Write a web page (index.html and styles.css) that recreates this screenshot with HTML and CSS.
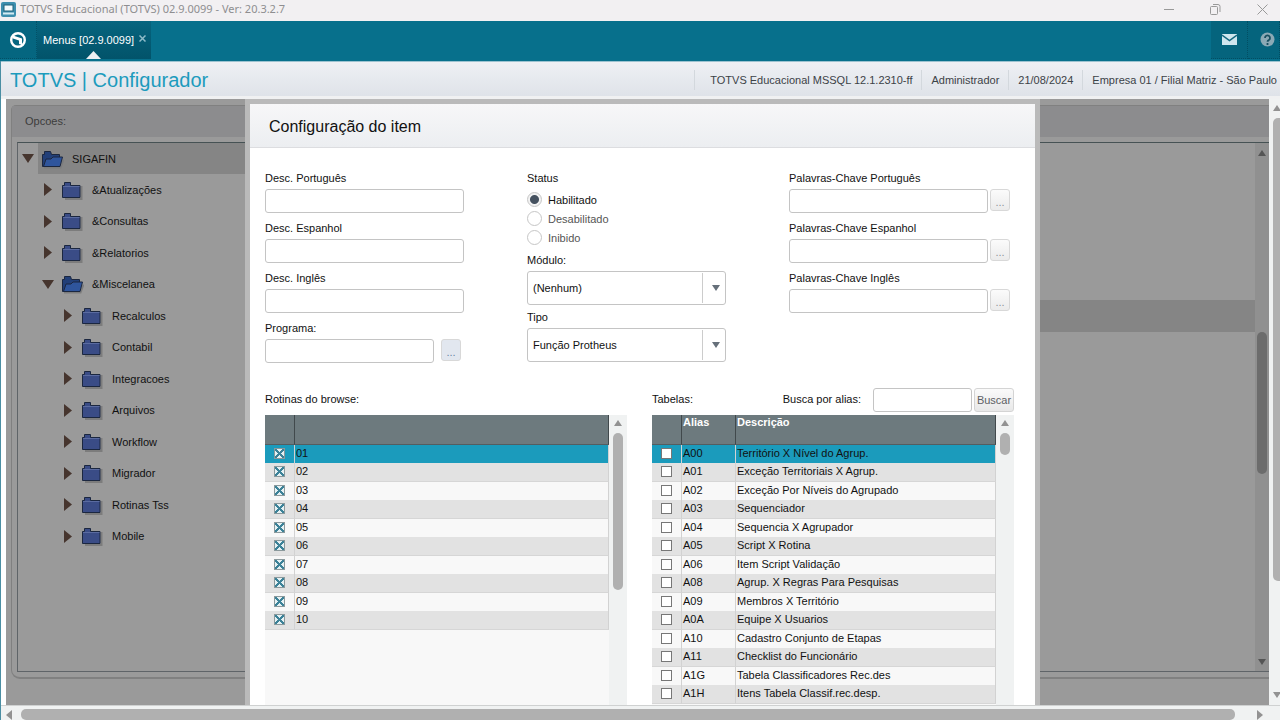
FILE: index.html
```
<!DOCTYPE html>
<html lang="pt-BR">
<head>
  <meta charset="utf-8">
  <title>TOTVS Educacional - Configurador</title>
  <link rel="stylesheet" href="styles.css">
</head>
<body>

  <!-- simbolos usados na pagina -->
  <svg class="defs" width="0" height="0">
    <symbol id="folder" viewBox="0 0 22 20">
      <path d="M3 19h16.500V6" fill="none" stroke="#7c7c7c" stroke-width="2"/>
      <path d="M.5 5.500h2V2.500h6v3h9.500v12H.5z" fill="#3a4c86" stroke="#1b2740"/>
      <path d="M1 6.500h16.500" stroke="#5a6ba0"/>
    </symbol>
    <symbol id="folder-open" viewBox="0 0 22 20">
      <path d="M2 18.500h16.500l3-8" fill="none" stroke="#7c7c7c" stroke-width="2"/>
      <path d="M.5 5.500h2v-3h6l1 3h8v12H.5z" fill="#223f78" stroke="#1b2740"/>
      <path d="M1.500 17.500L4 10h5l2-2h9.500L18 17.500z" fill="#2f559c" stroke="#1b2740"/>
    </symbol>
    <symbol id="up" viewBox="0 0 8 6"><path d="M4 0l4 6H0z" fill="currentColor"/></symbol>
    <symbol id="down" viewBox="0 0 8 6"><path d="M0 0h8L4 6z" fill="currentColor"/></symbol>
    <symbol id="left" viewBox="0 0 6 10"><path d="M6 0v10L0 5z" fill="currentColor"/></symbol>
    <symbol id="right" viewBox="0 0 6 10"><path d="M0 0l6 5-6 5z" fill="currentColor"/></symbol>
  </svg>

  <div class="titlebar">
    <svg width="15" height="15" viewBox="0 0 15 15">
      <rect width="15" height="15" rx="2" fill="#3e8fae"/>
      <rect x="3" y="3" width="9" height="6" fill="#f4fafc" stroke="#1f6079"/>
      <path d="M2 11.500h11" stroke="#d5ebf2" stroke-width="2"/>
    </svg>
    <span class="titlebar-text">TOTVS Educacional (TOTVS) 02.9.0099 - Ver: 20.3.2.7</span>
    <div class="window-buttons">
      <button aria-label="Minimizar"><svg width="10" height="10"><path d="M0 5.500h10" stroke="#999"/></svg></button>
      <button aria-label="Restaurar"><svg width="11" height="11" fill="none" stroke="#999"><rect x="0.500" y="2.500" width="7" height="8" rx="1"/><path d="M3 .5h5a2 2 0 0 1 2 2V8"/></svg></button>
      <button aria-label="Fechar"><svg width="11" height="11" stroke="#999"><path d="M.5.5l10 10M10.500.5l-10 10"/></svg></button>
    </div>
  </div>

  <div class="topbar">
    <a class="logo" href="#" aria-label="Inicio">
      <svg width="18" height="18" viewBox="0 0 18 18">
        <circle cx="9" cy="9" r="6.800" fill="none" stroke="#fff" stroke-width="2.400"/>
        <path d="M4 4.500l9 3v6.500L10 13V9.500L4 7.500z" fill="#fff"/>
      </svg>
    </a>
    <div class="tab">
      <span>Menus [02.9.0099]</span>
      <button class="tab-close" aria-label="Fechar aba"><svg width="7" height="7" stroke="#8fbcc9" stroke-width="1.500"><path d="M.5.5l6 6M6.500.5l-6 6"/></svg></button>
      <svg class="tab-mark" width="15" height="8"><path d="M7.500 0L15 8H0z" fill="#eef0f3"/></svg>
    </div>
    <div class="topbar-icons">
      <button aria-label="Mensagens">
        <svg width="15" height="11" viewBox="0 0 15 11"><rect width="15" height="11" fill="#cfe6ee"/><path d="M0 1l7.500 5.500L15 1" fill="none" stroke="#15687f" stroke-width="1.500"/></svg>
      </button>
      <button class="help" aria-label="Ajuda">
        <svg width="15" height="15" viewBox="0 0 15 15"><circle cx="7.500" cy="7.500" r="7" fill="#8aa9b5"/><path d="M5 6a2.500 2.500 0 1 1 3.800 2.100Q7.500 8.800 7.500 9.800M7.500 11v2" fill="none" stroke="#174f60" stroke-width="1.800"/></svg>
      </button>
    </div>
  </div>

  <div class="app">
    <header class="header">
      <h1>TOTVS | Configurador</h1>
      <ul class="info">
        <li>TOTVS Educacional MSSQL 12.1.2310-ff</li>
        <li>Administrador</li>
        <li>21/08/2024</li>
        <li>Empresa 01 / Filial Matriz - São Paulo</li>
      </ul>
    </header>

    <div class="main">
      <div class="content">
        <div class="panel">
          <div class="panel-title">Opcoes:</div>
          <div class="panel-body">
            <ul class="tree" id="tree"></ul>
            <div class="detail"><div class="detail-row"></div></div>
            <div class="scroll scroll-dark">
              <svg width="8" height="6"><use href="#up"/></svg>
              <div class="thumb"></div>
              <svg width="8" height="6"><use href="#down"/></svg>
            </div>
          </div>
        </div>

        <div class="overlay">
          <div class="modal" role="dialog" aria-labelledby="modalTitle">
            <h2 id="modalTitle">Configuração do item</h2>

            <form class="form" onsubmit="return false;">
              <div class="col">
                <div class="field"><label for="descPt">Desc. Português</label><input type="text" id="descPt"></div>
                <div class="field"><label for="descEs">Desc. Espanhol</label><input type="text" id="descEs"></div>
                <div class="field"><label for="descEn">Desc. Inglês</label><input type="text" id="descEn"></div>
                <div class="field">
                  <label for="programa">Programa:</label>
                  <div class="with-button programa"><input type="text" id="programa"><button class="more more-blue">...</button></div>
                </div>
              </div>

              <div class="col col-status">
                <fieldset>
                  <legend>Status</legend>
                  <label><input type="radio" name="status" checked>Habilitado</label>
                  <label><input type="radio" name="status">Desabilitado</label>
                  <label><input type="radio" name="status">Inibido</label>
                </fieldset>
                <div class="field">
                  <label for="modulo">Módulo:</label>
                  <div class="select"><select id="modulo"><option>(Nenhum)</option></select><span class="select-arrow"><svg width="8" height="6"><use href="#down"/></svg></span></div>
                </div>
                <div class="field">
                  <label for="tipo">Tipo</label>
                  <div class="select"><select id="tipo"><option>Função Protheus</option></select><span class="select-arrow"><svg width="8" height="6"><use href="#down"/></svg></span></div>
                </div>
              </div>

              <div class="col">
                <div class="field"><label for="chavePt">Palavras-Chave Português</label><div class="with-button"><input type="text" id="chavePt"><button class="more">...</button></div></div>
                <div class="field"><label for="chaveEs">Palavras-Chave Espanhol</label><div class="with-button"><input type="text" id="chaveEs"><button class="more">...</button></div></div>
                <div class="field"><label for="chaveEn">Palavras-Chave Inglês</label><div class="with-button"><input type="text" id="chaveEn"><button class="more">...</button></div></div>
              </div>
            </form>

            <div class="grids">
              <div class="grid">
                <div class="grid-title">Rotinas do browse:</div>
                <div class="grid-box">
                  <div class="grid-rows">
                    <table>
                      <thead><tr><th class="check-col"></th><th></th></tr></thead>
                      <tbody id="rotinas"></tbody>
                    </table>
                  </div>
                  <div class="scroll scroll-rotinas">
                    <svg width="8" height="6"><use href="#up"/></svg>
                    <div class="thumb"></div>
                  </div>
                </div>
              </div>

              <div class="grid">
                <div class="grid-title">
                  <span>Tabelas:</span>
                  <label class="busca-label" for="busca">Busca por alias:</label>
                  <input type="text" id="busca">
                  <button class="buscar">Buscar</button>
                </div>
                <div class="grid-box">
                  <div class="grid-rows">
                    <table>
                      <thead><tr><th class="check-col"></th><th class="alias-col">Alias</th><th>Descrição</th></tr></thead>
                      <tbody id="tabelas"></tbody>
                    </table>
                  </div>
                  <div class="scroll scroll-tabelas">
                    <svg width="8" height="6"><use href="#up"/></svg>
                    <div class="thumb"></div>
                  </div>
                </div>
              </div>
            </div>
          </div>
        </div>
      </div>

      <div class="scroll scroll-page">
        <svg width="8" height="6"><use href="#up"/></svg>
        <div class="thumb"></div>
        <svg width="8" height="6"><use href="#down"/></svg>
      </div>
    </div>

    <div class="scroll-h">
      <svg width="6" height="10"><use href="#left"/></svg>
      <div class="thumb"></div>
      <svg width="6" height="10"><use href="#right"/></svg>
    </div>
  </div>

  <script>
    const menu = {
      nome: "SIGAFIN", aberto: true, ativo: true, itens: [
        { nome: "&Atualizações" },
        { nome: "&Consultas" },
        { nome: "&Relatorios" },
        { nome: "&Miscelanea", aberto: true, itens: [
          { nome: "Recalculos" },
          { nome: "Contabil" },
          { nome: "Integracoes" },
          { nome: "Arquivos" },
          { nome: "Workflow" },
          { nome: "Migrador" },
          { nome: "Rotinas Tss" },
          { nome: "Mobile" }
        ] }
      ]
    };

    const tabelas = [
      ["A00", "Território X Nível do Agrup."],
      ["A01", "Exceção Territoriais X Agrup."],
      ["A02", "Exceção Por Níveis do Agrupado"],
      ["A03", "Sequenciador"],
      ["A04", "Sequencia X Agrupador"],
      ["A05", "Script X Rotina"],
      ["A06", "Item Script Validação"],
      ["A08", "Agrup. X Regras Para Pesquisas"],
      ["A09", "Membros X Território"],
      ["A0A", "Equipe X Usuarios"],
      ["A10", "Cadastro Conjunto de Etapas"],
      ["A11", "Checklist do Funcionário"],
      ["A1G", "Tabela Classificadores Rec.des"],
      ["A1H", "Itens Tabela Classif.rec.desp."]
    ];

    function renderItem(item) {
      const seta = item.aberto
        ? '<svg class="seta" width="12" height="9" viewBox="0 0 8 6"><use href="#down"/></svg>'
        : '<svg class="seta" width="8" height="13" viewBox="0 0 6 10" preserveAspectRatio="none"><use href="#right"/></svg>';
      const pasta = item.aberto ? "folder-open" : "folder";
      const filhos = item.itens ? `<ul>${item.itens.map(renderItem).join("")}</ul>` : "";
      return `
        <li>
          <div class="item">
            <span class="seta-box">${seta}</span>
            <a href="#" class="${item.ativo ? "ativo" : ""}">
              <svg width="22" height="20"><use href="#${pasta}"/></svg>${item.nome.replace("&", "&amp;")}
            </a>
          </div>
          ${filhos}
        </li>`;
    }

    document.getElementById("tree").innerHTML = renderItem(menu);

    let linhas = "";
    for (let i = 1; i <= 10; i++) {
      const num = String(i).padStart(2, "0");
      linhas += `<tr><td><input type="checkbox" checked aria-label="${num}"></td><td>${num}</td></tr>`;
    }
    document.getElementById("rotinas").innerHTML = linhas;

    document.getElementById("tabelas").innerHTML = tabelas.map(t =>
      `<tr><td><input type="checkbox" aria-label="${t[0]}"></td><td>${t[0]}</td><td>${t[1]}</td></tr>`
    ).join("");
  </script>

</body>
</html>
```
FILE: styles.css
```
* {
  box-sizing: border-box;
}
body {
  margin: 0;
  height: 100vh;
  display: flex;
  flex-direction: column;
  overflow: hidden;
  font-family: "Liberation Sans", Arial, sans-serif;
  font-size: 11px;
  line-height: 16px;
  color: #111;
  background: #fff;
}
ul {
  list-style: none;
  margin: 0;
  padding: 0;
}
button, input, select {
  font: inherit;
  color: inherit;
  margin: 0;
  padding: 0;
}
button {
  border: none;
  background: none;
}
svg {
  display: block;
  flex: none;
}
.defs {
  position: absolute;
}

/* barra da janela */
.titlebar {
  flex: none;
  height: 21px;
  padding: 0 12px 3px 1px;
  display: flex;
  align-items: center;
  gap: 4px;
  background: #f2f0f2;
  color: #8e8e90;
}
.titlebar-text {
  font-family: "Noto Sans", sans-serif;
}
.window-buttons {
  margin-left: auto;
  display: flex;
  gap: 36px;
}

/* barra superior */
.topbar {
  flex: none;
  height: 40px;
  display: flex;
  background: #07708c;
}
.logo {
  width: 37px;
  height: 38px;
  display: flex;
  align-items: center;
  justify-content: center;
  border-right: 1px dotted #035066;
  border-bottom: 1px dotted #035066;
  background: #056680;
}
.tab {
  position: relative;
  display: flex;
  align-items: center;
  gap: 5px;
  height: 38px;
  padding: 0 5px 1px 6px;
  color: #fff;
  background: linear-gradient(#06657f, #02536a);
}
.tab-close {
  padding-bottom: 2px;
}
.tab-mark {
  position: absolute;
  bottom: 0;
  left: 50%;
  margin-left: -8px;
}
.topbar-icons {
  margin-left: auto;
  display: flex;
}
.topbar-icons button {
  width: 37px;
  height: 38px;
  display: flex;
  align-items: center;
  justify-content: center;
  background: #05647d;
  border-right: 1px dotted #024e63;
  border-bottom: 1px dotted #024e63;
}
.topbar-icons .help {
  width: 32px;
  padding-left: 8px;
}

/* aplicacao */
.app {
  flex: 1;
  min-height: 0;
  display: flex;
  flex-direction: column;
  border-left: 1px solid #4a8ea3;
}
.header {
  flex: none;
  height: 38px;
  padding: 1px 3px 0 9px;
  display: flex;
  align-items: center;
  justify-content: space-between;
  background: linear-gradient(#eef0f4, #dfe3e9);
  border-top: 1px solid #9cc3d0;
  border-bottom: 3px solid #f0f1f2;
}
.header h1 {
  margin: 0;
  font-size: 20px;
  line-height: 26px;
  font-weight: normal;
  color: #1c9bbd;
}
.info {
  display: flex;
  color: #3c4247;
}
.info li {
  padding: 2px 9px;
  border-left: 1px solid #d3d8dd;
}
.info li:first-child {
  padding-left: 15px;
}
.info li:last-child {
  padding-right: 0;
}
.main {
  flex: 1;
  min-height: 0;
  display: flex;
  padding-left: 5px;
}
.content {
  position: relative;
  flex: 1;
  min-width: 0;
  padding: 6px 0 26px 5px;
  background: #9a9a9a;
}
.panel {
  height: 100%;
  display: flex;
  flex-direction: column;
  padding-bottom: 5px;
  border: 1px solid #808080;
  border-right: none;
  border-bottom-width: 2px;
  border-radius: 5px 0 0 9px;
}
.panel-title {
  flex: none;
  height: 31px;
  padding: 7px 13px;
  margin-bottom: 5px;
  color: #3c3c3c;
  background: #8c8c8e;
}
.panel-body {
  flex: 1;
  min-height: 0;
  display: flex;
  margin-left: 5px;
  border: 1px solid #5f6468;
  border-top-color: #465254;
  border-right: none;
}

/* arvore de menus */
.tree {
  width: 45%;
}
.item {
  height: 31px;
  display: flex;
}
.tree ul {
  padding-left: 20px;
}
.tree li:nth-child(even) > .item {
  height: 32px;
}
.seta-box {
  width: 20px;
  display: flex;
  align-items: center;
  justify-content: center;
  color: #46352e;
}
.item a {
  flex: 1;
  display: flex;
  align-items: center;
  gap: 8px;
  padding-left: 4px;
  color: #111;
  text-decoration: none;
}
.item .ativo {
  background: #858585;
}
.detail {
  flex: 1;
  padding-top: 157px;
}
.detail-row {
  height: 32px;
  background: #858585;
}

/* barras de rolagem */
.scroll {
  flex: none;
  display: flex;
  flex-direction: column;
  align-items: center;
  color: #929292;
  background: #f0f2f2;
}
.thumb {
  border-radius: 5px;
  background: #b0b0b0;
}
.scroll-dark {
  width: 14px;
  padding: 7px 0 6px;
  justify-content: space-between;
  color: #555;
  background: #909090;
}
.scroll-dark .thumb {
  width: 10px;
  height: 142px;
  margin-bottom: 10px;
  background: #6c6c6c;
}
.scroll-page {
  width: 11px;
  padding: 6px 0 7px 4px;
  gap: 7px;
}
.scroll-page .thumb {
  width: 8px;
  height: 78%;
  border-radius: 5px 0 0 5px;
}
.scroll-page svg:last-child {
  margin-top: auto;
}
.scroll-h {
  flex: none;
  height: 15px;
  padding: 3px 17px 0 5px;
  display: flex;
  align-items: center;
  gap: 9px;
  color: #929292;
  background: #f0f2f2;
  border-top: 1px solid #cfd1d1;
}
.scroll-h .thumb {
  flex: 1;
  height: 11px;
  margin-right: 13px;
}

/* janela de configuracao */
.overlay {
  position: absolute;
  inset: 0;
  display: flex;
  padding: 0 229px 0 239px;
}
.modal {
  flex: 1;
  min-width: 0;
  display: flex;
  flex-direction: column;
  border: 5px solid #bababa;
  border-bottom: none;
  background: #fff;
}
.modal h2 {
  flex: none;
  margin: 0;
  height: 44px;
  padding: 0 19px;
  font-size: 16px;
  line-height: 45px;
  font-weight: normal;
  background: linear-gradient(#f7f7f8, #eceef1);
  border-bottom: 1px solid #dcdde0;
}
.form {
  flex: none;
  display: grid;
  grid-template-columns: 1fr 1fr 1fr;
  column-gap: 41px;
  padding: 22px 25px 25px 15px;
}
.col {
  display: flex;
  flex-direction: column;
  gap: 7px;
}
.field {
  display: flex;
  flex-direction: column;
  gap: 3px;
}
input[type="text"] {
  width: calc(100% - 22px);
  height: 24px;
  padding: 0 6px;
  border: 1px solid #c4c4c4;
  border-radius: 3px;
  background: #fff;
}
.with-button {
  display: flex;
  align-items: flex-start;
  gap: 2px;
}
.with-button input[type="text"] {
  flex: 1;
  min-width: 0;
}
.programa {
  gap: 7px;
  padding-right: 25px;
}
.more {
  width: 20px;
  height: 22px;
  padding-top: 3px;
  color: #8e949a;
  border: 1px solid #d8d8d8;
  border-radius: 3px;
  background: linear-gradient(#fbfbfb, #ebebeb);
}
.more-blue {
  color: #6a86a4;
  background: #e2e7ef;
}
fieldset {
  margin: 0;
  padding: 0;
  border: none;
}
legend {
  padding: 0;
  margin-bottom: 4px;
}
fieldset label {
  display: flex;
  align-items: center;
  gap: 6px;
  height: 19px;
  color: #555;
}
fieldset label:has(:checked) {
  color: #111;
}
input[type="radio"] {
  appearance: none;
  width: 15px;
  height: 15px;
  border: 1px solid #c6c6c6;
  border-radius: 50%;
  background: #fff;
}
input[type="radio"]:checked {
  background: radial-gradient(#45515f 4px, #f2f2f2 5px);
}
.col-status {
  gap: 4px;
}
.col-status fieldset {
  margin-bottom: 1px;
}
.select {
  position: relative;
  width: calc(100% - 22px);
}
.select select {
  appearance: none;
  display: block;
  width: 100%;
  height: 34px;
  padding: 0 30px 0 5px;
  border: 1px solid #c4c4c4;
  border-radius: 3px;
  background: #fff;
}
.select-arrow {
  position: absolute;
  top: 2px;
  bottom: 2px;
  right: 1px;
  width: 23px;
  display: flex;
  align-items: center;
  padding-left: 9px;
  border-left: 1px solid #ccc;
  color: #66707a;
  pointer-events: none;
}

/* tabelas */
.grids {
  flex: 1;
  min-height: 0;
  display: grid;
  grid-template-columns: 1fr 1fr;
  grid-template-rows: minmax(0, 1fr);
  column-gap: 25px;
  padding: 0 21px 0 15px;
}
.grid {
  display: flex;
  flex-direction: column;
  gap: 3px;
}
.grid-title {
  flex: none;
  height: 24px;
  display: flex;
  align-items: center;
  padding-bottom: 2px;
}
.busca-label {
  margin-left: auto;
  margin-right: 12px;
}
.grid-title input[type="text"] {
  width: 99px;
  margin: 2px 2px 0 0;
}
.buscar {
  width: 40px;
  height: 24px;
  margin-top: 2px;
  white-space: nowrap;
  color: #5c6064;
  border: 1px solid #d4d4d4;
  border-radius: 3px;
  background: linear-gradient(#fafafa, #e8e8e8);
}
.grid-box {
  flex: 1;
  min-height: 0;
  display: flex;
}
.grid-rows {
  flex: 1;
  overflow: hidden;
  background: #f8f8f8;
}
table {
  width: 100%;
  table-layout: fixed;
  border-collapse: separate;
  border-spacing: 0;
}
th {
  height: 30px;
  padding: 0 1px;
  text-align: left;
  vertical-align: top;
  line-height: 14px;
  color: #fff;
  background: #6d7a7e;
  border-right: 1px solid #41494c;
  border-bottom: 1px solid #545d60;
}
.check-col {
  width: 30px;
}
.alias-col {
  width: 54px;
}
td {
  height: 18px;
  padding: 0 1px;
  line-height: 17px;
  vertical-align: top;
  border-right: 1px solid #d2d2d2;
  background: #f8f8f8;
}
tr:nth-child(even) td {
  height: 19px;
  background: #e2e2e2;
  border-bottom: 1px solid #d6d6d6;
}
tbody tr:first-child td {
  background: #1b9bbc;
}
input[type="checkbox"] {
  appearance: none;
  display: block;
  width: 11px;
  height: 11px;
  margin: 3px auto 0;
  border: 1px solid #777;
  background: #fff;
}
/* o x da caixa marcada */
input[type="checkbox"]:checked {
  border-color: #8b999c;
  background:
    linear-gradient(45deg, transparent 43%, #3c8298 43%, #3c8298 57%, transparent 57%),
    linear-gradient(135deg, #e6f1f3 43%, #3c8298 43%, #3c8298 57%, #e6f1f3 57%);
}
.scroll-rotinas, .scroll-tabelas {
  width: 18px;
  padding-top: 5px;
  gap: 7px;
}
.scroll-rotinas .thumb {
  width: 10px;
  height: 157px;
}
.scroll-tabelas .thumb {
  width: 10px;
  height: 22px;
}
```
